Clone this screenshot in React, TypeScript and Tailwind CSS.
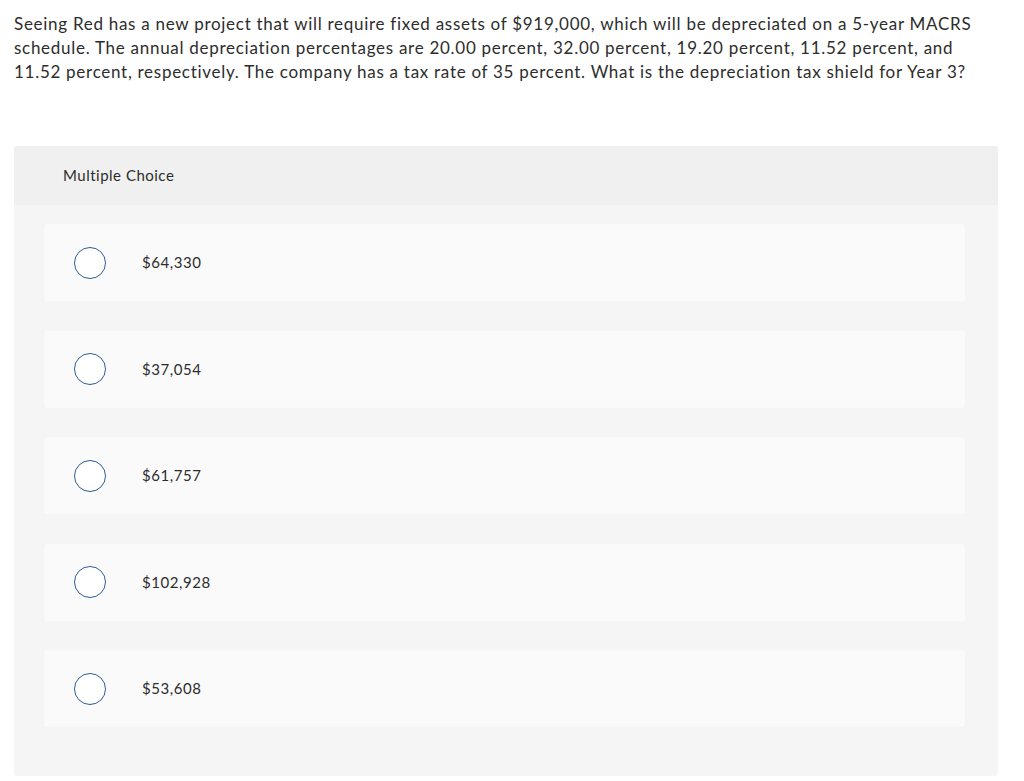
const options = ["$64,330", "$37,054", "$61,757", "$102,928", "$53,608"];

export default function App() {
  return (
    <div className="min-h-screen bg-white text-[#2d2d2d]" style={{ fontFamily: "Lato, 'Open Sans', sans-serif" }}>
      <div className="px-[14px] pt-[12px]">
        <p className="text-[17px] leading-[24px] tracking-[0.72px]">
          Seeing Red has a new project that will require fixed assets of $919,000, which will be depreciated on a 5-year MACRS
          <br />
          schedule. The annual depreciation percentages are 20.00 percent, 32.00 percent, 19.20 percent, 11.52 percent, and
          <br />
          11.52 percent, respectively. The company has a tax rate of 35 percent. What is the depreciation tax shield for Year 3?
        </p>

        <div className="mt-[62px] w-[984px] rounded-[3px] bg-[#f5f5f5] overflow-hidden">
          <div className="h-[59px] bg-[#f0f0f0] flex items-center pl-[49px]">
            <span className="text-[15px] tracking-[0.5px]">Multiple Choice</span>
          </div>
          <div className="pl-[30px] pr-[33px] pt-[19px] pb-[49px] flex flex-col gap-[29.5px]">
            {options.map((opt) => (
              <label key={opt} className="h-[77px] rounded-[4px] bg-[#fafafa] flex items-center cursor-pointer">
                <span className="ml-[30px] w-[32px] h-[32px] rounded-full border-[1.5px] border-[#2b5e94] bg-white shrink-0" />
                <span className="ml-[36px] text-[15px] tracking-[0.55px]">{opt}</span>
              </label>
            ))}
          </div>
        </div>
      </div>
    </div>
  );
}
